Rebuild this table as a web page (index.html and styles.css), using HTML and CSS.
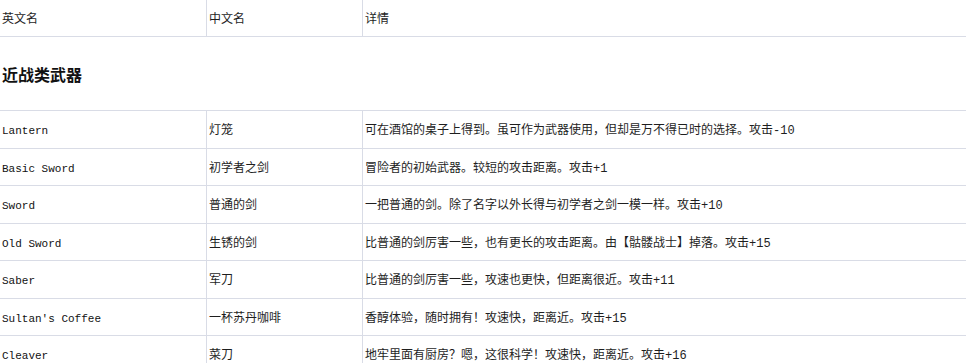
FILE: index.html
```html
<!DOCTYPE html>
<html lang="zh-CN">
<head>
<meta charset="utf-8">
<title>武器列表</title>
<link rel="stylesheet" href="styles.css">
</head>
<body>
<div class="sheet">
  <div class="row head">
    <div class="cell c1">英文名</div>
    <div class="cell c2">中文名</div>
    <div class="cell c3">详情</div>
  </div>
  <div class="section"><h2 class="section-title">近战类武器</h2></div>
  <div class="row">
    <div class="cell c1 en">Lantern</div>
    <div class="cell c2">灯笼</div>
    <div class="cell c3">可在酒馆的桌子上得到。虽可作为武器使用，但却是万不得已时的选择。攻击-10</div>
  </div>
  <div class="row">
    <div class="cell c1 en">Basic Sword</div>
    <div class="cell c2">初学者之剑</div>
    <div class="cell c3">冒险者的初始武器。较短的攻击距离。攻击+1</div>
  </div>
  <div class="row">
    <div class="cell c1 en">Sword</div>
    <div class="cell c2">普通的剑</div>
    <div class="cell c3">一把普通的剑。除了名字以外长得与初学者之剑一模一样。攻击+10</div>
  </div>
  <div class="row">
    <div class="cell c1 en">Old Sword</div>
    <div class="cell c2">生锈的剑</div>
    <div class="cell c3">比普通的剑厉害一些，也有更长的攻击距离。由【骷髅战士】掉落。攻击+15</div>
  </div>
  <div class="row">
    <div class="cell c1 en">Saber</div>
    <div class="cell c2">军刀</div>
    <div class="cell c3">比普通的剑厉害一些，攻速也更快，但距离很近。攻击+11</div>
  </div>
  <div class="row">
    <div class="cell c1 en">Sultan's Coffee</div>
    <div class="cell c2">一杯苏丹咖啡</div>
    <div class="cell c3">香醇体验，随时拥有！攻速快，距离近。攻击+15</div>
  </div>
  <div class="row">
    <div class="cell c1 en">Cleaver</div>
    <div class="cell c2">菜刀</div>
    <div class="cell c3">地牢里面有厨房？嗯，这很科学！攻速快，距离近。攻击+16</div>
  </div>
</div>
</body>
</html>
```

FILE: styles.css
```css
html, body {
  margin: 0;
  padding: 0;
  background: #ffffff;
}
body {
  font-family: "Liberation Mono", "Noto Sans CJK SC", monospace;
  font-size: 12px;
  color: #1e1e1e;
}
.sheet {
  width: 966px;
}
.row {
  display: grid;
  grid-template-columns: 206px 156px 1fr;
  height: 37.5px;
  box-sizing: border-box;
  border-bottom: 1px solid #d9dce6;
}
.row.head {
  height: 37px;
}
.cell {
  display: flex;
  align-items: center;
  padding-left: 2px;
  white-space: nowrap;
  overflow: hidden;
}
.c2, .c3 {
  border-left: 1px solid #d9dce6;
}
.en {
  font-size: 11px;
  padding-top: 4px;
  box-sizing: border-box;
  color: #111111;
}
.section {
  height: 74px;
  box-sizing: border-box;
  border-bottom: 1px solid #d9dce6;
  display: flex;
  align-items: center;
  padding-left: 2px;
}
.section-title {
  margin: 0;
  font-family: "Noto Sans CJK SC", sans-serif;
  font-size: 16px;
  font-weight: 700;
  color: #111111;
}
```
